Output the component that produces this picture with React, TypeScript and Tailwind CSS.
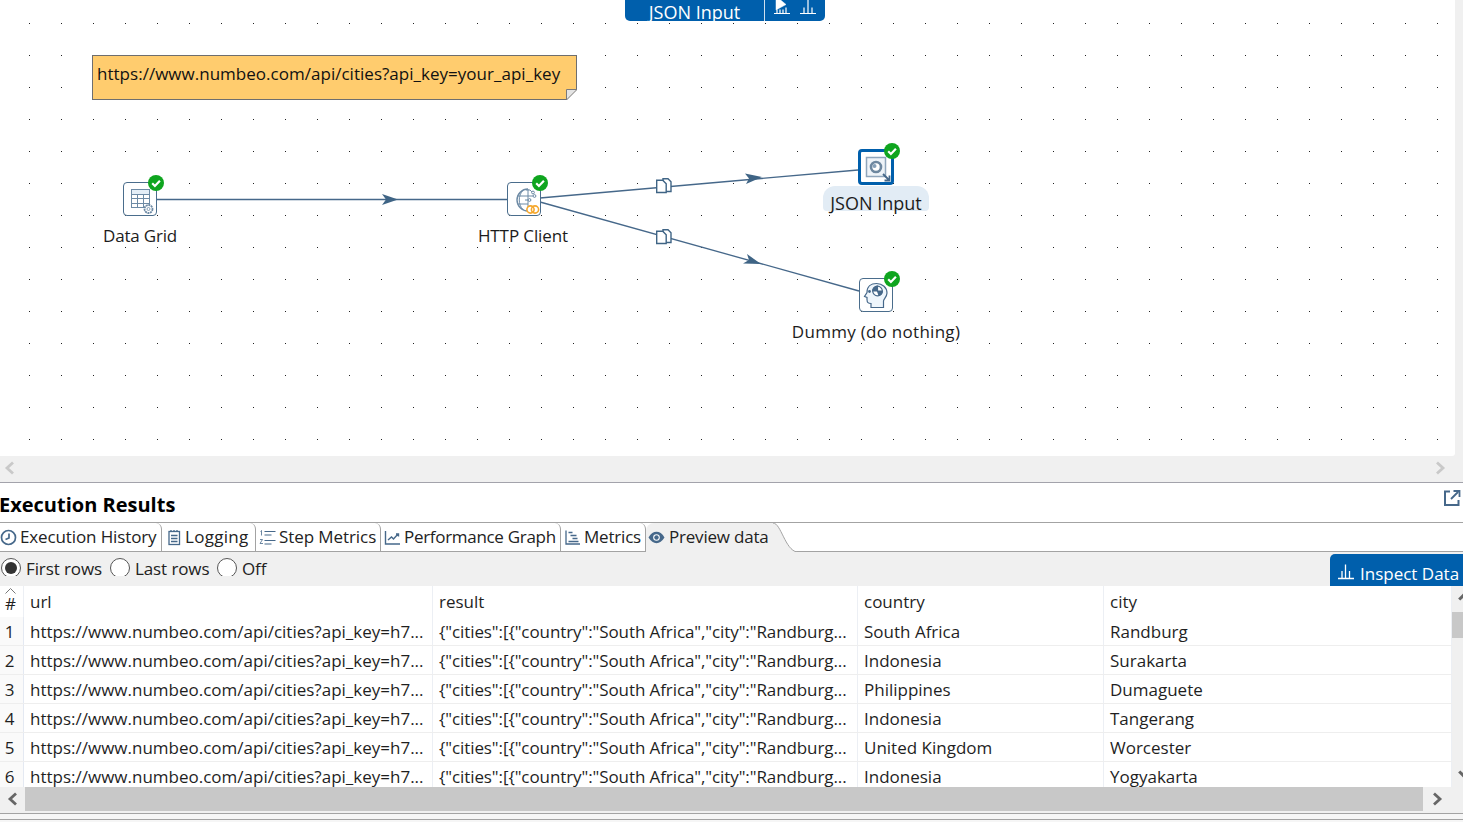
import React from "react";

const font = "font-['Open_Sans','Noto_Sans',sans-serif]";
const stroke = "#46688a";

function Check({ className }: { className: string }) {
  return (
    <svg className={`absolute ${className}`} width="17" height="17" viewBox="0 0 17 17">
      <circle cx="8" cy="8" r="8" fill="#0fa51f" />
      <path d="M4.200 8.300l2.700 2.700 5-5.200" fill="none" stroke="#fff" strokeWidth="2.200" />
    </svg>
  );
}

function DataGridIcon() {
  return (
    <svg width="32" height="32" viewBox="0 0 32 32" fill="none" stroke="#6d8aa5">
      <rect x="7.500" y="6.500" width="18" height="18" fill="#fff" />
      <rect x="7.500" y="6.500" width="18" height="5" fill="#e4eef7" />
      <path d="M7.500 15.500h18M7.500 20.500h18M13.500 11.500v13M19.500 11.500v13" />
      <circle cx="24.500" cy="26" r="4" fill="#fff" strokeWidth="1.800" strokeDasharray="2 0.6" />
      <circle cx="24.500" cy="26" r="1.500" fill="#fff" strokeWidth="0.800" />
    </svg>
  );
}

function HttpIcon() {
  return (
    <svg width="32" height="32" viewBox="0 0 32 32" fill="none" stroke="#6d8aa5">
      <path d="M20 6A11 11 0 0 0 20 28" strokeWidth="1.400" />
      <path d="M15 7C10 13 10 21 15 27M20 6V28M9.500 13H20M9.500 21H20" strokeWidth="1" />
      <path d="M18 7h4l2 2M20 13h5M20 17h-3" strokeWidth="1" />
      <circle cx="25" cy="9.500" r="1.400" fill="#fff" />
      <circle cx="26.500" cy="13" r="1.400" fill="#fff" />
      <circle cx="21.500" cy="17" r="1.400" fill="#fff" />
      <circle cx="22.500" cy="26.500" r="3.600" fill="#fff" stroke="#f5a72c" strokeWidth="1.600" />
      <circle cx="27" cy="26.500" r="3.600" stroke="#f5a72c" strokeWidth="1.600" />
    </svg>
  );
}

function JsonIcon() {
  return (
    <svg width="30" height="30" viewBox="0 0 30 30" fill="none">
      <rect x="5.500" y="5.500" width="19" height="19" fill="#eef3f8" stroke="#8ea5bb" strokeWidth="1.500" />
      <circle cx="15" cy="15" r="5" fill="#fff" stroke="#6d879f" strokeWidth="2.600" />
      <circle cx="13.500" cy="14" r="2" fill="#86a0b8" />
      <path d="M22 22l6.500 6.500M28.500 23.500v5h-5" stroke="#46688a" strokeWidth="1.800" />
    </svg>
  );
}

function DummyIcon() {
  return (
    <svg width="32" height="32" viewBox="0 0 32 32" fill="none" stroke={stroke} strokeWidth="1.200">
      <path d="M11 28.500v-4c-3 0-4-1-4-4v-2l-2.500-1 2.500-4C7 7.500 11 4.500 16.500 4.500c6 0 10.500 4 10.500 9.500 0 4-3.500 6-3.500 8v6.500z" fill="#eef5fb" />
      <circle cx="17.500" cy="12" r="4.800" fill="#fff" />
      <path d="M17.500 7.200V12h-4.800a4.800 4.800 0 0 1 4.800-4.800z" fill="#46688a" />
      <path d="M17.500 12h4.800a4.800 4.800 0 0 1-3.200 4.500z" fill="#46688a" />
      <circle cx="9.500" cy="12.500" r="0.800" fill="#46688a" />
    </svg>
  );
}

function CopyGlyph({ x, y }: { x: number; y: number }) {
  return (
    <g transform={`translate(${x} ${y})`} fill="#fff" stroke="#3f6485" strokeWidth="1.400">
      <path d="M7 .7h5l3 3v9.800H7z" />
      <path d="M.7 2.200h6l3.500 3.500v8.800H.7z" />
    </g>
  );
}

function Arrow({ points }: { points: string }) {
  return <polygon points={points} fill="#3f6485" />;
}

function Canvas() {
  return (
    <div className="relative h-[456px] w-[1455px] overflow-hidden rounded-br-[3px] bg-white">
      <svg className="absolute inset-0" width="1455" height="456">
        <defs>
          <pattern id="dots" x="29" y="23" width="32" height="32" patternUnits="userSpaceOnUse">
            <rect width="1" height="1" fill="#222" />
          </pattern>
        </defs>
        <rect width="1455" height="456" fill="url(#dots)" />
        <g stroke="#46688a" strokeWidth="1.300">
          <line x1="157" y1="199.500" x2="507" y2="199.500" />
          <line x1="540" y1="198" x2="858" y2="170" />
          <line x1="540" y1="202" x2="859" y2="291" />
        </g>
        <Arrow points="398,199.500 382,194 386,199.500 382,205" />
        <Arrow points="762,177 745,173.500 749,178.500 746,184" />
        <Arrow points="761,264 747,254 749,260 743,263.500" />
        <CopyGlyph x={656} y={178} />
        <CopyGlyph x={656} y={229} />
      </svg>

      <div className={`absolute left-[92px] top-[55px] flex h-[45px] w-[485px] items-center border border-[#6e6e6e] bg-[#ffcc6e] pl-[4px] pb-[7px] text-[17px] tracking-[0.02px] text-[#111] ${font}`}>
        https://www.numbeo.com/api/cities?api_key=your_api_key
        <svg className="absolute -bottom-px -right-px" width="11" height="11" viewBox="0 0 11 11">
          <path d="M11 0V11H0z" fill="#fff" />
          <path d="M.5 11V.5H11z" fill="#e4e4e4" stroke="#7a7a7a" />
        </svg>
      </div>

      <div className="absolute left-[123px] top-[182px] h-[34px] w-[34px] rounded-[4px] border border-[#4a6d8c] bg-white">
        <DataGridIcon />
      </div>
      <Check className="left-[148px] top-[175px]" />
      <div className={`absolute left-[60px] top-[223px] w-[160px] text-center text-[17px] tracking-[-0.2px] text-[#1c1c1c] ${font}`}>Data Grid</div>

      <div className="absolute left-[507px] top-[182px] h-[34px] w-[34px] rounded-[4px] border border-[#4a6d8c] bg-white">
        <HttpIcon />
      </div>
      <Check className="left-[532px] top-[175px]" />
      <div className={`absolute left-[443px] top-[223px] w-[160px] text-center text-[17px] tracking-[-0.1px] text-[#1c1c1c] ${font}`}>HTTP Client</div>

      <div className="absolute left-[858px] top-[149px] h-[36px] w-[36px] rounded-[4px] border-[3px] border-[#005fac] bg-white">
        <JsonIcon />
      </div>
      <Check className="left-[884px] top-[143px]" />
      <div className={`absolute left-[823px] top-[186px] h-[25px] w-[106px] rounded-t-[12px] rounded-b-[4px] bg-[#e2ecf5] text-center text-[18px] leading-[34px] text-[#1c1c1c] ${font}`}>JSON Input</div>

      <div className="absolute left-[859px] top-[278px] h-[34px] w-[34px] rounded-[4px] border border-[#4a6d8c] bg-white">
        <DummyIcon />
      </div>
      <Check className="left-[884px] top-[271px]" />
      <div className={`absolute left-[776px] top-[319px] w-[200px] text-center text-[17px] tracking-[0.28px] text-[#1c1c1c] ${font}`}>Dummy (do nothing)</div>

      <div className={`absolute left-[625px] top-0 flex h-[21px] w-[200px] rounded-b-[5px] bg-[#005fac] text-white ${font}`}>
        <div className="h-full w-[140px] border-r border-[#cfe0ef] text-center text-[18px] leading-[24px]">JSON Input</div>
        <svg width="60" height="21" viewBox="0 0 60 21" fill="none" stroke="#fff" strokeWidth="1.200">
          <path d="M9 13.500h16M12 13.500v-4M15 13.500v-4M18 13.500v-4M21 13.500v-6" />
          <path d="M11 0v10l10-5.500-6-5z" fill="#fff" strokeWidth="0.500" />
          <path d="M35 13.500h16M39 13.500v-6M43 13.500V0M47 13.500v-6" />
        </svg>
      </div>
    </div>
  );
}

function Chevron({ dir, color, className }: { dir: "l" | "r"; color: string; className?: string }) {
  return (
    <svg className={className} width="11" height="14" viewBox="0 0 11 14" fill="none" stroke={color} strokeWidth="2.800">
      <path d={dir === "l" ? "M9 1.500L3 7l6 5.500" : "M2 1.500L8 7l-6 5.500"} />
    </svg>
  );
}

const tabIconClass = "mr-[3px] shrink-0";

const tabs = [
  {
    label: "Execution History",
    cls: "w-[162px] pl-[0px] tracking-[-0.12px]",
    icon: (
      <svg className={tabIconClass} width="17" height="17" viewBox="0 0 17 17" fill="none" stroke={stroke} strokeWidth="1.700">
        <circle cx="8.500" cy="8.500" r="7" />
        <path d="M9 4.500v4.500l-3.500 1.500" />
      </svg>
    ),
  },
  {
    label: "Logging",
    cls: "w-[94px] pl-[5px] tracking-[0.3px]",
    icon: (
      <svg className={tabIconClass} width="15" height="17" viewBox="0 0 15 17" fill="none" stroke={stroke} strokeWidth="1.300">
        <rect x="2" y="2.500" width="10.500" height="13" />
        <path d="M4 6.500h6.500M4 9.500h6.500M4 12.500h6.500" />
        <path d="M4 1v2M7 1v2M10 1v2" />
      </svg>
    ),
  },
  {
    label: "Step Metrics",
    cls: "w-[125px] pl-[3px] tracking-[-0.08px]",
    icon: (
      <svg className={tabIconClass} width="17" height="17" viewBox="0 0 17 17" fill="none" stroke={stroke} strokeWidth="1.200">
        <path d="M1.500 2.500l1-1v5M1 10.500h2.500l-2.500 4h3" strokeWidth="0.800" />
        <path d="M5.500 2.500h11M5.500 6h7M5.500 11.500h11M5.500 15h7" />
      </svg>
    ),
  },
  {
    label: "Performance Graph",
    cls: "w-[180px] pl-[3px] tracking-[-0.3px]",
    icon: (
      <svg className={tabIconClass} width="17" height="17" viewBox="0 0 17 17" fill="none" stroke={stroke} strokeWidth="1.400">
        <path d="M1.500 2v13h14.500" />
        <path d="M4 11l3.500-3 2 2 4.500-5M12 5h2.500v2.500" />
      </svg>
    ),
  },
  {
    label: "Metrics",
    cls: "w-[85px] pl-[3px] tracking-[-0.2px]",
    icon: (
      <svg className={tabIconClass} width="17" height="17" viewBox="0 0 17 17" fill="none" stroke={stroke} strokeWidth="1.300">
        <path d="M2 1.500V15h14" />
        <path d="M4.500 3.500h4M6.500 6.500h6M8.500 9.500h5M4.500 12.500h10" strokeWidth="1.600" />
      </svg>
    ),
  },
];

function Tabs() {
  return (
    <div className="flex h-[30px] border-y border-[#a3a3a3] bg-white">
      {tabs.map((t) => (
        <div key={t.label} className={`flex h-full items-center rounded-tr-[6px] border-r border-[#a3a3a3] ${t.cls} whitespace-nowrap text-[17px] text-[#222] ${font}`}>
          {t.icon}
          {t.label}
        </div>
      ))}
      <div className={`relative z-10 -mb-px flex h-[29px] w-[128px] items-center rounded-tl-[8px] bg-[#f0f0f0] pl-[2px] pb-[1px] tracking-[-0.2px] whitespace-nowrap text-[17px] text-[#222] ${font}`}>
        <svg className="mr-[4px] shrink-0" width="17" height="13" viewBox="0 0 17 13">
          <path d="M.500 6.500C3 2.500 5.500.800 8.500.800s5.500 1.700 8 5.700c-2.500 4-5 5.700-8 5.700S3 10.500.500 6.500z" fill="#46688a" />
          <circle cx="8.500" cy="6.500" r="3.300" fill="#fff" />
          <circle cx="8.500" cy="6.500" r="2.200" fill="#46688a" />
        </svg>
        Preview data
      </div>
      <svg className="relative z-10 -mb-px -ml-px" width="24" height="29" viewBox="0 0 24 29">
        <path d="M0 0C8 0 12 27 24 29H0z" fill="#f0f0f0" />
        <path d="M0 0C8 0 12 27 24 29" fill="none" stroke="#a3a3a3" />
      </svg>
    </div>
  );
}

function Radio({ on, label, cls }: { on?: boolean; label: string; cls: string }) {
  return (
    <div className={`flex h-[18px] items-center overflow-visible ${cls}`}>
      <div className="h-[18px] w-[20px] shrink-0 overflow-hidden">
        <div className="flex h-[20px] w-[20px] items-center justify-center rounded-full border border-[#555] bg-white">
          {on && <div className="h-[12px] w-[12px] rounded-full bg-[#333]" />}
        </div>
      </div>
      <span className={`ml-[5px] mt-[4px] whitespace-nowrap text-[17px] tracking-[-0.1px] text-[#222] ${font}`}>{label}</span>
    </div>
  );
}

function Toolbar() {
  return (
    <div className="flex h-[34px] items-start bg-[#f0f0f0] pt-[6px]">
      <Radio on label="First rows" cls="ml-[1px] w-[109px]" />
      <Radio label="Last rows" cls="w-[107px]" />
      <Radio label="Off" cls="w-[60px]" />
      <div className={`ml-auto -mt-[4px] flex h-[32px] w-[133px] items-center rounded-tl-[5px] bg-[#005fac] pl-[8px] whitespace-nowrap text-[17px] text-white ${font}`}>
        <svg className="mr-[5px] mt-[2px] shrink-0" width="17" height="17" viewBox="0 0 17 17" fill="none" stroke="#fff" strokeWidth="1.300">
          <path d="M0 15.500h16M4 15.500V8M7.500 15.500V1.500M11.500 15.500V8" />
        </svg>
        <span className="mt-[7px]">Inspect Data</span>
      </div>
    </div>
  );
}

const rows = [
  ["1", "South Africa", "Randburg"],
  ["2", "Indonesia", "Surakarta"],
  ["3", "Philippines", "Dumaguete"],
  ["4", "Indonesia", "Tangerang"],
  ["5", "United Kingdom", "Worcester"],
  ["6", "Indonesia", "Yogyakarta"],
];
const url = "https://www.numbeo.com/api/cities?api_key=h7...";
const result = '{"cities":[{"country":"South Africa","city":"Randburg...';
const cols = "grid grid-cols-[24px_409px_425px_246px_348px]";
const cell = "flex items-center overflow-hidden whitespace-nowrap border-r border-[#eceff4] pl-[6px] text-[17px] text-[#1f1f1f]";

function Table() {
  return (
    <div className="flex h-[201px] bg-[#f0f0f0]">
      <div className={`h-full w-[1452px] overflow-hidden bg-white ${font}`}>
        <div className={`${cols} h-[31px]`}>
          <div className="relative flex items-center justify-center border-r border-[#eceff4] pr-[2px] pt-[5px] text-[17px] text-[#1f1f1f]">
            #
            <svg className="absolute left-[5px] top-[2px]" width="11" height="6" viewBox="0 0 11 6" fill="none" stroke="#777">
              <path d="M.500 5.500l5-5 5 5" />
            </svg>
          </div>
          {["url", "result", "country", "city"].map((h) => (
            <div key={h} className={cell}>{h}</div>
          ))}
        </div>
        {rows.map((r) => (
          <div key={r[0]} className={`${cols} h-[29px] border-b border-[#eeeeee]`}>
            <div className="flex items-center justify-center border-r border-[#e4e9f2] bg-[#fafafa] pr-[4px] pt-[2px] text-[17px] text-[#1f1f1f]">{r[0]}</div>
            <div className={`${cell} pt-[2px]`}>{url}</div>
            <div className={`${cell} pt-[2px] tracking-[-0.09px]`}>{result}</div>
            <div className={`${cell} pt-[2px]`}>{r[1]}</div>
            <div className={`${cell} pt-[2px]`}>{r[2]}</div>
          </div>
        ))}
      </div>
      <div className="relative h-full flex-1 overflow-hidden">
        <div className="absolute left-[8px] top-[8px] h-[9px] w-[9px] rotate-45 border-l-[3px] border-t-[3px] border-[#666]" />
        <div className="absolute left-0 top-[26px] h-[26px] w-full bg-[#c8c8c8]" />
        <div className="absolute left-[8px] bottom-[10px] h-[9px] w-[9px] rotate-45 border-b-[3px] border-r-[3px] border-[#666]" />
      </div>
    </div>
  );
}

export default function App() {
  return (
    <div className="h-[822px] w-[1463px] overflow-hidden bg-white">
      <div className="bg-[#f0f0f0]">
        <Canvas />
        <div className="flex h-[26px] items-center justify-between pb-[2px] pl-[4px] pr-[17px]">
          <Chevron dir="l" color="#c9c9c9" />
          <Chevron dir="r" color="#c9c9c9" />
        </div>
      </div>
      <div className="flex h-[40px] items-center justify-between border-t border-[#a3a3ab] bg-white pt-[5px]">
        <h2 className={`-ml-[1px] text-[20px] font-bold text-black ${font}`}>Execution Results</h2>
        <svg className="mb-[14px] mr-[2px]" width="18" height="18" viewBox="0 0 18 18" fill="none" stroke="#46688a" strokeWidth="2">
          <path d="M7 2.500H2v13.500h13.500v-5" />
          <path d="M8 10l7-7M10.500 2h6v6" strokeWidth="1.800" />
        </svg>
      </div>
      <Tabs />
      <Toolbar />
      <Table />
      <div className="flex h-[26px] bg-[#f0f0f0]">
        <div className="flex w-[25px] items-center justify-center pb-[2px]">
          <Chevron dir="l" color="#666" />
        </div>
        <div className="h-[24px] w-[1398px] bg-[#c8c8c8]" />
        <div className="flex w-[28px] items-center justify-center pb-[2px]">
          <Chevron dir="r" color="#666" />
        </div>
      </div>
      <div className="h-[9px] border-t border-[#a3a3a3] bg-[#f6f6f6]">
        <div className="mt-[5px] border-t border-[#a3a3a3]" />
      </div>
    </div>
  );
}
